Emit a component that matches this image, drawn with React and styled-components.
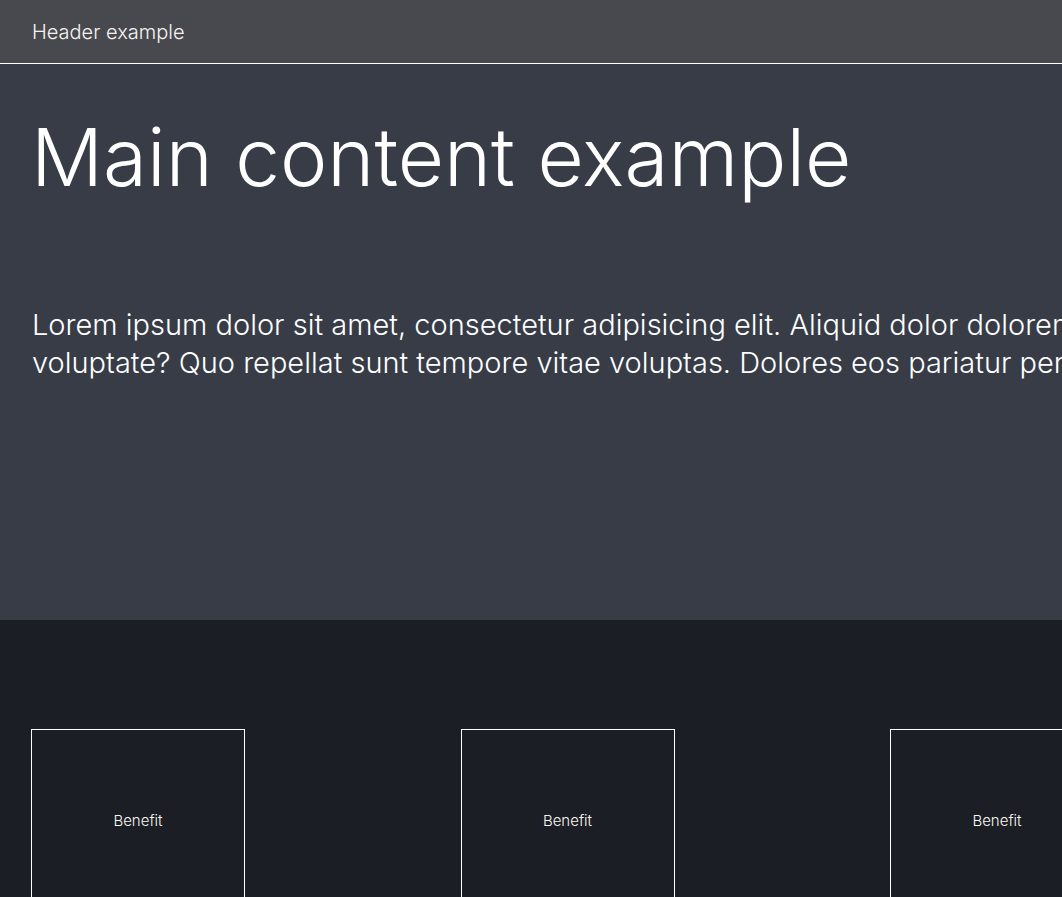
import React from 'react';
import styled, { createGlobalStyle } from 'styled-components';

const GlobalStyle = createGlobalStyle`
  html, body {
    margin: 0;
    overflow: hidden;
  }
  body {
    font-family: "Inter", "Liberation Sans", sans-serif;
    color: #ffffff;
    background: #1c1e25;
  }
`;

const Page = styled.div`
  min-width: 1352px;
`;

const Header = styled.header`
  height: 63px;
  display: flex;
  align-items: center;
  padding: 0 32px;
  background-color: #48494e;
  border-bottom: 1px solid #ffffff;
`;

const HeaderTitle = styled.span`
  font-size: 20px;
  font-weight: 300;
  color: #f6f3ee;
`;

const Main = styled.main`
  box-sizing: border-box;
  min-height: 556px;
  padding: 45px 32px 0 31px;
  background-color: #373c47;
`;

const Title = styled.h1`
  margin: 0;
  font-size: 80px;
  font-weight: 300;
  line-height: 96px;
`;

const Lead = styled.p`
  margin: 101px 0 0 1px;
  font-size: 29px;
  font-weight: 300;
  line-height: 38px;
  white-space: nowrap;
`;

const Benefits = styled.section`
  display: grid;
  grid-template-columns: repeat(3, 429.5px);
  padding: 109px 31px 60px;
  background-color: #1c1e25;
`;

const BenefitCard = styled.div`
  box-sizing: border-box;
  width: 214px;
  height: 182px;
  display: flex;
  align-items: center;
  justify-content: center;
  border: 1px solid #ffffff;
  font-family: "Inter", "Liberation Sans", sans-serif;
  font-size: 15px;
  font-weight: 300;
  color: #fbf8f2;
`;

const benefits = ['Benefit', 'Benefit', 'Benefit'];

export default function App() {
  return (
    <Page>
      <GlobalStyle />
      <Header>
        <HeaderTitle>Header example</HeaderTitle>
      </Header>
      <Main>
        <Title>Main content example</Title>
        <Lead>
          Lorem ipsum dolor sit amet, consectetur adipisicing elit. Aliquid dolor doloremque, aut
          <br />
          voluptate? Quo repellat sunt tempore vitae voluptas. Dolores eos pariatur perspiciatis.
        </Lead>
      </Main>
      <Benefits>
        {benefits.map((label, i) => (
          <BenefitCard key={i}>{label}</BenefitCard>
        ))}
      </Benefits>
    </Page>
  );
}
